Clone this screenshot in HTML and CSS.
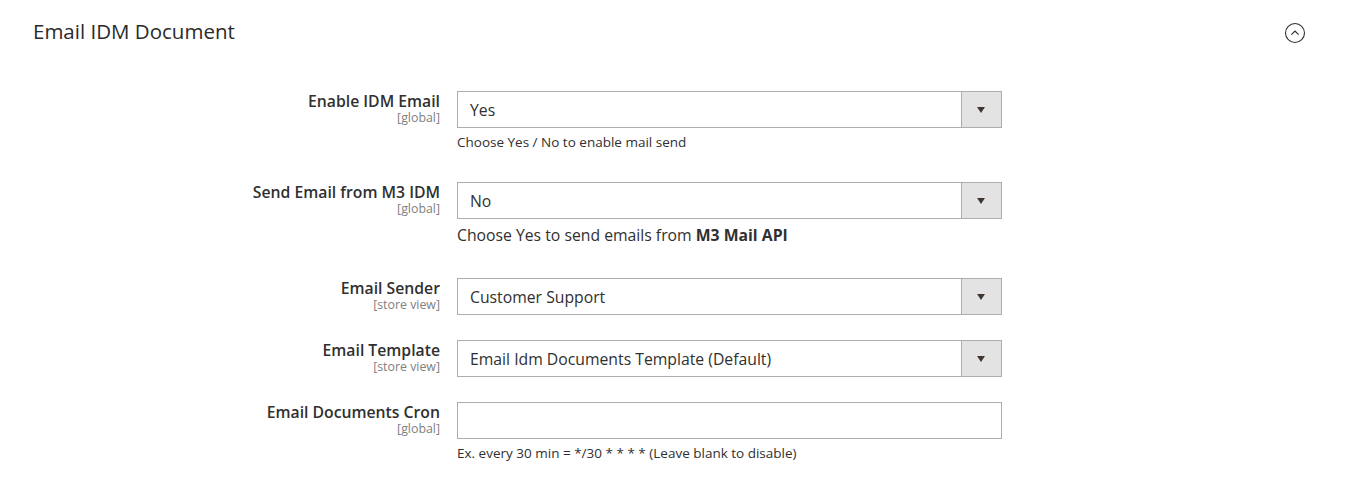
FILE: index.html
```html
<!DOCTYPE html>
<html>
<head>
<meta charset="utf-8">
<link rel="stylesheet" href="styles.css">
</head>
<body>
<section class="section">
  <header class="section-head">
    <h2 class="section-title">Email IDM Document</h2>
    <span class="collapse-btn">
      <svg width="22" height="22" viewBox="0 0 22 22">
        <circle cx="11" cy="11" r="9.5" fill="none" stroke="#303030" stroke-width="1.1"/>
        <path d="M7.4 12.6 L11 9.1 L14.6 12.6" fill="none" stroke="#303030" stroke-width="1.2"/>
      </svg>
    </span>
  </header>
  <div class="form">
    <div class="row">
      <div class="label"><span class="label-text">Enable IDM Email</span><span class="scope">[global]</span></div>
      <div class="field">
        <div class="select"><span class="value">Yes</span><span class="arrow"></span></div>
        <p class="note">Choose Yes / No to enable mail send</p>
      </div>
    </div>
    <div class="row">
      <div class="label"><span class="label-text">Send Email from M3 IDM</span><span class="scope">[global]</span></div>
      <div class="field">
        <div class="select"><span class="value">No</span><span class="arrow"></span></div>
        <p class="note note-large">Choose Yes to send emails from <strong>M3 Mail API</strong></p>
      </div>
    </div>
    <div class="row">
      <div class="label"><span class="label-text">Email Sender</span><span class="scope">[store view]</span></div>
      <div class="field">
        <div class="select"><span class="value">Customer Support</span><span class="arrow"></span></div>
      </div>
    </div>
    <div class="row">
      <div class="label"><span class="label-text">Email Template</span><span class="scope">[store view]</span></div>
      <div class="field">
        <div class="select"><span class="value">Email Idm Documents Template (Default)</span><span class="arrow"></span></div>
      </div>
    </div>
    <div class="row">
      <div class="label"><span class="label-text">Email Documents Cron</span><span class="scope">[global]</span></div>
      <div class="field">
        <div class="input"></div>
        <p class="note">Ex. every 30 min = */30 * * * * (Leave blank to disable)</p>
      </div>
    </div>
  </div>
</section>
</body>
</html>
```
FILE: styles.css
```css
html, body {
  margin: 0;
  padding: 0;
  background: #fff;
}
body {
  font-family: "Open Sans", "Noto Sans", sans-serif;
  color: #303030;
  width: 1345px;
  height: 487px;
  overflow: hidden;
}
.section-head {
  display: flex;
  align-items: flex-start;
  justify-content: space-between;
  padding: 17px 39px 0 33px;
  height: 44px;
}
.section-title {
  margin: 0;
  font-size: 20.5px;
  font-weight: 500;
  color: #2b2b2b;
  line-height: 28px;
}
.collapse-btn {
  display: flex;
  width: 22px;
  height: 22px;
  margin-top: 5px;
}
.form {
  padding-top: 30px;
}
.row {
  display: flex;
  margin-bottom: 25px;
}
.label {
  width: 440px;
  padding-right: 17px;
  display: flex;
  flex-direction: column;
  align-items: flex-end;
}
.label-text {
  display: block;
  font-size: 15.75px;
  font-weight: 600;
  line-height: 20px;
  color: #303030;
}
.scope {
  display: block;
  font-size: 12.375px;
  line-height: 14px;
  color: #808080;
}
.field {
  width: 545px;
}
.select, .input {
  box-sizing: border-box;
  height: 37px;
  border: 1px solid #adadad;
  display: flex;
  align-items: center;
  background: #fff;
}
.value {
  flex: 1;
  padding-left: 12px;
  font-size: 15.75px;
  color: #303030;
}
.arrow {
  width: 39px;
  height: 100%;
  background: #e3e3e3;
  border-left: 1px solid #adadad;
  position: relative;
}
.arrow::after {
  content: "";
  position: absolute;
  left: 15px;
  top: 15px;
  border-left: 4.5px solid transparent;
  border-right: 4.5px solid transparent;
  border-top: 6px solid #41362f;
}
.note {
  margin: 4px 0 5px 0;
  font-size: 13.5px;
  line-height: 20px;
  color: #303030;
}
.note-large {
  font-size: 15.75px;
  line-height: 24px;
  margin-bottom: 6px;
}
.note strong {
  font-weight: 700;
}
```
